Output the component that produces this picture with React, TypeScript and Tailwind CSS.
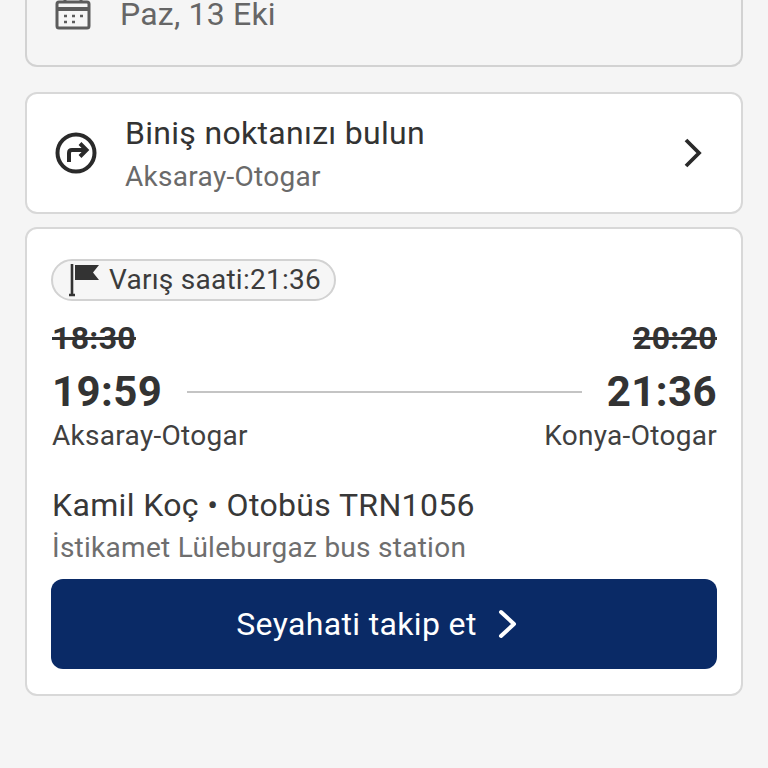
import React from "react";

const F = { fontFamily: "Roboto, 'Noto Sans', sans-serif" };

export default function App() {
  return (
    <div style={F} className="h-[768px] w-[768px] overflow-hidden bg-[#f5f5f5] px-[25px]">
      <div className="flex h-[67px] items-start gap-[27px] rounded-b-[12px] border-2 border-t-0 border-[#d2d2d2] pl-[28px]">
        <svg width="38" height="30" viewBox="0 0 38 30" className="shrink-0 text-[#5c5c5c]" fill="none">
          <path d="M2 4 Q2 2 4 2 H32 Q34 2 34 4 V26 Q34 28 32 28 H4 Q2 28 2 26 Z" stroke="currentColor" strokeWidth="3" />
          <path d="M2 9 H34" stroke="currentColor" strokeWidth="4" />
          <path d="M10 0 V3 M26 0 V3" stroke="currentColor" strokeWidth="3" />
          <path d="M9 16 h3 M17 16 h3 M25 16 h3 M9 22 h3 M17 22 h3" stroke="currentColor" strokeWidth="2.4" />
        </svg>
        <span className="text-[32px] leading-[28px] tracking-[0.2px] text-[#666666]">Paz, 13 Eki</span>
      </div>

      <div className="mt-[25px] flex h-[122px] items-center rounded-[12px] border-2 border-[#d8d8d8] bg-white pl-[28px] pr-[38px]">
        <svg width="42" height="42" viewBox="0 0 42 42" fill="none" className="shrink-0 text-[#2a2a2a]">
          <circle cx="21" cy="21" r="18.5" stroke="currentColor" strokeWidth="4" />
          <path d="M14 30 V21 Q14 18 17 18 H31 M25 11.5 L31.5 18 L25 24.5" stroke="currentColor" strokeWidth="4" />
        </svg>
        <div className="ml-[28px] flex flex-1 flex-col">
          <span className="mt-[2px] text-[32px] leading-[40px] tracking-[0.3px] text-[#333333]">Biniş noktanızı bulun</span>
          <span className="mt-[6px] text-[28px] leading-[36px] tracking-[0.3px] text-[#6a6a6a]">Aksaray-Otogar</span>
        </div>
        <svg width="20" height="32" viewBox="0 0 20 32" fill="none" className="shrink-0 text-[#2a2a2a]">
          <path d="M3 3 L16 16 L3 29" stroke="currentColor" strokeWidth="3.8" />
        </svg>
      </div>

      <div className="mt-[13px] flex h-[469px] flex-col rounded-[12px] border-2 border-[#d8d8d8] bg-white px-[24px]">
        <div className="mt-[30px] flex h-[42px] w-[285px] items-center rounded-full border-2 border-[#d2d2d2] bg-[#f6f6f6] pl-[15px]">
          <svg width="32" height="34" viewBox="0 0 32 34" fill="none" className="shrink-0 text-[#333333]">
            <path d="M4 1 V31 M1 32 H7" stroke="currentColor" strokeWidth="2.6" />
            <path d="M7 2 H31 L25 9.5 L31 17 H7 Z" fill="currentColor" />
          </svg>
          <span className="ml-[9px] whitespace-nowrap text-[28px] leading-[34px] tracking-[0.25px] text-[#3c3c3c]">Varış saati:21:36</span>
        </div>

        <div className="mt-[18px] flex justify-between pl-[1px] text-[32px] font-bold leading-[38px] tracking-[0.3px] text-[#333333] line-through">
          <span>18:30</span>
          <span>20:20</span>
        </div>

        <div className="mt-[10px] flex items-center pl-[1px] text-[42px] font-bold leading-[50px] tracking-[0.4px] text-[#333333]">
          <span>19:59</span>
          <div className="mx-[25px] h-[2px] flex-1 bg-[#c4c4c4]" />
          <span>21:36</span>
        </div>

        <div className="mt-[1px] flex justify-between pl-[1px] text-[28px] leading-[36px] tracking-[0.3px] text-[#404040]">
          <span>Aksaray-Otogar</span>
          <span>Konya-Otogar</span>
        </div>

        <div className="mt-[31px] pl-[1px] text-[32px] leading-[40px] tracking-[0.35px] text-[#383838]">Kamil Koç • Otobüs TRN1056</div>
        <div className="mt-[5px] pl-[1px] text-[28px] leading-[36px] tracking-[0.27px] text-[#6e6e6e]">İstikamet Lüleburgaz bus station</div>

        <button className="mt-[13px] flex h-[90px] w-full items-center justify-center rounded-[12px] bg-[#0a2a66] pr-[14px] text-[32px] tracking-[0.35px] text-white">
          <span>Seyahati takip et</span>
          <svg width="20" height="30" viewBox="0 0 20 30" fill="none" className="ml-[21px] shrink-0">
            <path d="M3 3 L16 15 L3 27" stroke="white" strokeWidth="4" strokeLinecap="round" strokeLinejoin="round" />
          </svg>
        </button>
      </div>
    </div>
  );
}
